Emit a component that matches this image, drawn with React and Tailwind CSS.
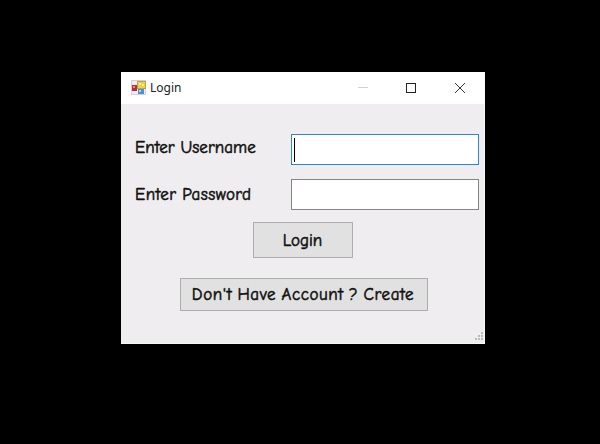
const comic = "font-['Comic_Sans_MS','Comic_Neue','Lato',sans-serif] font-medium text-[17px] leading-5 whitespace-nowrap text-[#111] [-webkit-text-stroke:0.55px_#111]";

function FormIcon() {
  return (
    <svg width="16" height="16" viewBox="0 0 16 16" className="shrink-0">
      <rect x=".5" y=".5" width="14" height="14" fill="#f1eef3" stroke="#d3d0da" />
      <rect x="1" y="5" width="5" height="6" fill="#b92c3d" />
      <path d="M2 6h2v2H2z" fill="#e78a90" />
      <rect x="6.5" y="1.5" width="8" height="7" fill="#f0d044" stroke="#c5a238" />
      <path d="M8 3h2v2H8zM11 4h2v2h-2z" fill="#fff09a" />
      <rect x="7" y="9" width="6" height="5" fill="#4795d8" />
      <path d="M8 10h2v2H8z" fill="#a9d9fb" />
    </svg>
  );
}

function TitleBar() {
  return (
    <header className="flex h-8 items-center bg-white pl-[10px]">
      <FormIcon />
      <h1 className="ml-[3px] font-['Noto_Sans',sans-serif] text-[12px] leading-4 text-[#222]">Login</h1>
      <svg width="112" height="12" viewBox="0 0 112 12" fill="none" className="ml-auto mr-[14px]" shapeRendering="crispEdges">
        <path d="M0 5.5h10" stroke="#d0d0d0" />
        <path d="M48.5 1.5h9v9h-9z" stroke="#222" />
        <path d="M97 1l10 10M107 1L97 11" stroke="#333" shapeRendering="auto" />
      </svg>
    </header>
  );
}

function Grip() {
  return (
    <svg width="9" height="9" viewBox="0 0 9 9" fill="#bdbcbd" className="absolute bottom-0.5 right-0">
      <path d="M6 0h2v2H6zM3 3h2v2H3zM6 3h2v2H6zM0 6h2v2H0zM3 6h2v2H3zM6 6h2v2H6z" />
    </svg>
  );
}

export default function App() {
  return (
    <main className="h-[444px] w-[600px] overflow-hidden bg-black pl-[121px] pt-[72px]">
      <section className="relative flex h-[272px] w-[364px] flex-col border-b border-r border-[#f8f8f8] bg-[#efedef]">
        <TitleBar />
        <div className="flex flex-col pt-[30px]">
          <div className="flex h-[31px] items-start pl-[14px]">
            <label className={`${comic} w-[156px] pt-[4px]`}><span className="tracking-[0.07px]">Enter Username</span></label>
            <div className="h-[31px] w-[188px] border border-[#2f86cc] bg-white pl-[2px] pt-[3px]">
              <div className="h-6 w-px bg-black" />
            </div>
          </div>
          <div className="mt-[14px] flex h-[31px] items-start pl-[14px]">
            <label className={`${comic} w-[156px] pt-[6px]`}><span className="tracking-[0.4px]">Enter Password</span></label>
            <div className="h-[31px] w-[188px] border border-[#858487] bg-white" />
          </div>
          <button className={`${comic} ml-[132px] mt-[12px] flex h-[36px] w-[100px] items-center justify-center border border-[#adadad] bg-[#e1e1e1] pr-px pt-px`}>
            <span>Login</span>
          </button>
          <button className={`${comic} ml-[59px] mt-[20px] flex h-[33px] w-[248px] items-center justify-center border border-[#adadad] bg-[#e1e1e1] pr-[2px]`}>
            <span className="tracking-[0.6px] [word-spacing:-1px]">Don't Have Account ? Create</span>
          </button>
        </div>
        <Grip />
      </section>
    </main>
  );
}
